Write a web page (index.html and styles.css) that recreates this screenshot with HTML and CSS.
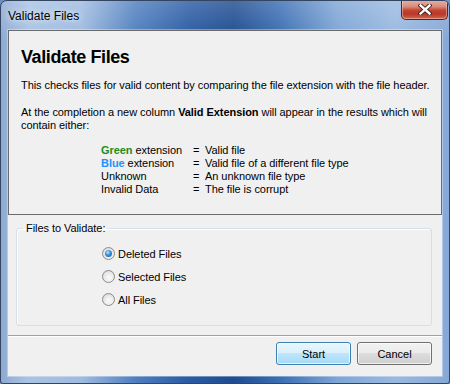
FILE: index.html
```html
<!DOCTYPE html>
<html>
<head>
<meta charset="utf-8">
<link rel="stylesheet" href="styles.css">
</head>
<body>
<div class="window">
  <div class="titlebar">
    <span class="title">Validate Files</span>
    <button class="close" aria-label="Close">
      <svg width="14" height="11" viewBox="0 0 14 11">
        <path d="M2.5 1.5 L11.5 9.5 M11.5 1.5 L2.5 9.5" stroke="#3b1a14" stroke-width="4.2" stroke-linecap="square" fill="none"/>
        <path d="M2.5 1.5 L11.5 9.5 M11.5 1.5 L2.5 9.5" stroke="#ffffff" stroke-width="2.4" stroke-linecap="square" fill="none"/>
      </svg>
    </button>
  </div>
  <div class="client">
    <div class="info">
      <h1 class="heading">Validate Files</h1>
      <p class="line">This checks files for valid content by comparing the file extension with the file header.</p>
      <p class="line para2">At the completion a new column <b>Valid Extension</b> will appear in the results which will<br>contain either:</p>
      <div class="legend">
        <span><b class="green">Green</b> extension</span><span>=</span><span>Valid file</span>
        <span><b class="blue">Blue</b> extension</span><span>=</span><span>Valid file of a different file type</span>
        <span>Unknown</span><span>=</span><span>An unknown file type</span>
        <span>Invalid Data</span><span>=</span><span>The file is corrupt</span>
      </div>
    </div>
    <fieldset class="group">
      <legend class="group-label">Files to Validate:</legend>
      <div class="options">
        <div class="option"><span class="radio checked"></span><span>Deleted Files</span></div>
        <div class="option"><span class="radio"></span><span>Selected Files</span></div>
        <div class="option"><span class="radio"></span><span>All Files</span></div>
      </div>
    </fieldset>
    <div class="footer">
      <button class="btn default">Start</button>
      <button class="btn">Cancel</button>
    </div>
  </div>
</div>
</body>
</html>
```
FILE: styles.css
```css
html, body {
  margin: 0;
  padding: 0;
  background: #6d8fc0;
}
.window {
  width: 450px;
  height: 384px;
  box-sizing: border-box;
  border: 1px solid #34465f;
  border-radius: 7px 7px 3px 3px;
  padding: 0 7px 7px 7px;
  display: flex;
  flex-direction: column;
  background:
    linear-gradient(180deg, rgba(255,255,255,0.18) 0, rgba(255,255,255,0) 40px),
    linear-gradient(90deg, #8eaad3 0%, #aac3e3 6%, #9fbbe0 18%, #4f7fbf 30%, #2a5ba3 42%, #1f4c90 52%, #3a6db2 62%, #7ea5d6 75%, #9ab9e0 88%, #86a8d6 100%);
  font-family: "Liberation Sans", Arial, sans-serif;
  font-size: 11px;
  color: #000;
  overflow: hidden;
}
.titlebar {
  height: 29px;
  display: flex;
  align-items: flex-start;
  flex: none;
}
.title {
  font-size: 12px;
  line-height: 15px;
  margin-top: 8px;
  margin-left: 0;
  color: #000;
  text-shadow: 0 0 5px rgba(230,240,250,0.95), 0 0 9px rgba(220,235,250,0.8), 0 0 14px rgba(220,235,250,0.6);
}
.close {
  margin-left: auto;
  margin-right: -6px;
  margin-top: -1px;
  width: 47px;
  height: 20px;
  padding: 0;
  box-sizing: border-box;
  border: 1px solid #5a2218;
  border-top: none;
  border-radius: 0 0 5px 5px;
  background: linear-gradient(180deg, #e9b3a6 0%, #d98a7a 35%, #c2432f 55%, #b9392a 75%, #d06a50 100%);
  box-shadow: inset 0 0 0 1px rgba(255,220,210,0.45);
  display: flex;
  align-items: center;
  justify-content: center;
}
.client {
  flex: 1;
  background: #f0f0f0;
  display: flex;
  flex-direction: column;
  box-shadow: 0 0 0 1px rgba(255,255,255,0.35);
  letter-spacing: -0.06px;
}
.info {
  height: 185px;
  box-sizing: border-box;
  border: 1px solid #6b6b6b;
  padding: 15px 12px 0 12px;
}
.heading {
  margin: 0 0 11px 0;
  font-size: 18px;
  line-height: 22px;
  font-weight: bold;
  letter-spacing: -0.4px;
}
.line {
  margin: 0;
  line-height: 13px;
  white-space: nowrap;
}
.para2 {
  margin-top: 14px;
}
.legend {
  margin: 12px 0 0 80px;
  display: grid;
  grid-template-columns: 92px 12px auto;
  line-height: 13px;
  white-space: nowrap;
}
.green { color: #1e8c1e; }
.blue { color: #1e90ff; }
.group {
  margin: 7px 10px 0 8px;
  padding: 0 0 14px 0;
  height: 104px;
  box-sizing: border-box;
  border: 1px solid #d5dfe5;
  border-radius: 3px;
  box-shadow: inset 1px 1px 0 #ffffff;
  min-width: 0;
}
.group-label {
  margin-left: 6px;
  padding: 0 3px;
  line-height: 13px;
}
.options {
  padding: 7px 0 0 85px;
  display: flex;
  flex-direction: column;
}
.option {
  height: 23px;
  display: flex;
  align-items: center;
  gap: 3px;
}
.radio {
  width: 13px;
  height: 13px;
  box-sizing: border-box;
  border-radius: 50%;
  border: 1px solid #8c8c8c;
  background: radial-gradient(circle at 55% 60%, #fbfbfb 0, #ececec 45%, #cfcfcf 100%);
  display: flex;
  align-items: center;
  justify-content: center;
}
.radio.checked::after {
  content: "";
  width: 7px;
  height: 7px;
  border-radius: 50%;
  background: radial-gradient(circle at 40% 35%, #c2e8ff 0, #3c97dc 40%, #13548f 100%);
}
.footer {
  margin-top: 9px;
  border-top: 1px solid #a0a0a0;
  box-shadow: inset 0 1px 0 #ffffff;
  padding: 6px 10px 0 0;
  display: flex;
  justify-content: flex-end;
  gap: 6px;
}
.btn {
  width: 75px;
  height: 23px;
  padding: 0;
  box-sizing: border-box;
  border: 1px solid #707070;
  border-radius: 3px;
  font-family: "Liberation Sans", Arial, sans-serif;
  font-size: 11px;
  color: #000;
  background: linear-gradient(180deg, #f2f2f2 0%, #ebebeb 49%, #dddddd 50%, #cfcfcf 100%);
  box-shadow: inset 0 0 0 1px rgba(255,255,255,0.7);
}
.btn.default {
  border-color: #3c7fb1;
  background: linear-gradient(180deg, #eaf6fd 0%, #d9f0fc 49%, #bee6fd 50%, #a7d9f5 100%);
}
```
